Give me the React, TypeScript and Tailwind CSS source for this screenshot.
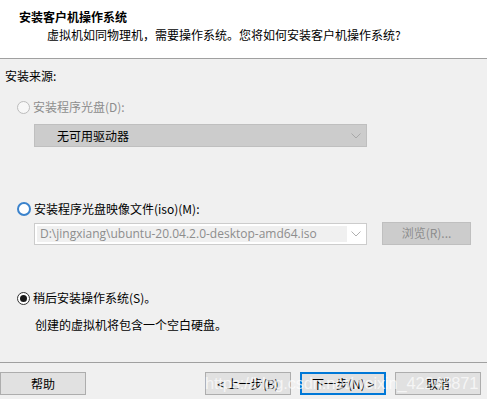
import React from 'react';

const font = { fontFamily: '"Noto Sans CJK SC", "Microsoft YaHei", sans-serif' };

type RadioState = 'disabled' | 'focus' | 'checked';

const Radio: React.FC<{ state: RadioState }> = ({ state }) => {
  if (state === 'disabled') {
    return <span className="block w-[13px] h-[13px] rounded-full border border-[#bcbcbc] bg-[#f7f7f7]" />;
  }
  if (state === 'focus') {
    return <span className="block w-[14px] h-[14px] rounded-full border-2 border-[#3b83cc] bg-white" />;
  }
  return (
    <span className="flex items-center justify-center w-[13px] h-[13px] rounded-full border border-[#333333] bg-white">
      <span className="block w-[7px] h-[7px] rounded-full bg-[#1a1a1a]" />
    </span>
  );
};

const Chevron: React.FC<{ color?: string }> = ({ color = '#a8a8a8' }) => (
  <svg width="10" height="6" viewBox="0 0 10 6" className="shrink-0">
    <polyline points="0.5,0.5 5,5 9.5,0.5" fill="none" stroke={color} strokeWidth="1" />
  </svg>
);

const Button: React.FC<{ label: string; primary?: boolean; className?: string }> = ({ label, primary, className = '' }) => (
  <div
    className={`h-[23px] w-[86px] flex items-center justify-center bg-[#e1e1e1] text-[12px] text-black ${
      primary ? 'border-2 border-[#0078d7]' : 'border border-[#adadad]'
    } ${className}`}
  >
    {label}
  </div>
);

export default function App() {
  return (
    <div className="relative w-[487px] h-[399px] bg-[#f0f0f0] overflow-hidden text-[12px] leading-[16px] text-black" style={font}>
      <div className="h-[59px] bg-white border-b border-[#a0a0a0]">
        <div className="pl-[19px] pt-[9px] font-bold">安装客户机操作系统</div>
        <div className="pl-[47px] pt-[2px]">虚拟机如同物理机，需要操作系统。您将如何安装客户机操作系统?</div>
      </div>

      <div className="pl-[5px] mt-[9px]">安装来源:</div>

      <div className="flex items-center gap-[3px] pl-[17px] mt-[15px] text-[#8d8d8d]">
        <Radio state="disabled" />
        <span>安装程序光盘(D):</span>
      </div>
      <div className="ml-[34px] mt-[9px] w-[333px] h-[23px] bg-[#cccccc] border border-[#bfbfbf] flex items-center pl-[22px] pr-[5px]">
        <span className="flex-1">无可用驱动器</span>
        <Chevron />
      </div>

      <div className="flex items-center gap-[3px] pl-[17px] mt-[54px]">
        <Radio state="focus" />
        <span>安装程序光盘映像文件(iso)(M):</span>
      </div>
      <div className="flex items-center mt-[6px] pl-[34px]">
        <div className="w-[333px] h-[22px] bg-white border border-[#cccccc] flex items-center p-[2px] pr-[5px]">
          <div className="w-[310px] h-full bg-[#f0f0f0] text-[#8d8d8d] flex items-center pl-[3px]" style={{ fontFamily: '"Open Sans", "Noto Sans", sans-serif', fontSize: '12px' }}>
            D:\jingxiang\ubuntu-20.04.2.0-desktop-amd64.iso
          </div>
          <div className="flex-1" />
          <Chevron color="#b0b0b0" />
        </div>
        <div className="ml-[15px] w-[89px] h-[23px] -mt-[2px] bg-[#cccccc] border border-[#bfbfbf] flex items-center justify-center text-[#8d8d8d]">
          浏览(R)...
        </div>
      </div>

      <div className="flex items-center gap-[3px] pl-[17px] mt-[45px]">
        <Radio state="checked" />
        <span>稍后安装操作系统(S)。</span>
      </div>
      <div className="pl-[35px] mt-[11px]">创建的虚拟机将包含一个空白硬盘。</div>

      <div className="mt-[29px] border-t border-[#a0a0a0]" />

      <div className="flex items-center mt-[9px]">
        <Button label="帮助" />
        <div className="flex-1" />
        <Button label="< 上一步(B)" />
        <Button label="下一步(N) >" primary className="ml-[9px]" />
        <Button label="取消" className="ml-[9px] mr-[6px]" />
      </div>

      <div
        className="absolute left-[205px] top-[372px] text-[16.5px] leading-[22px] tracking-[-0.2px] text-white/70 whitespace-nowrap pointer-events-none"
        style={{ fontFamily: '"Liberation Sans", sans-serif' }}
      >
        https://blog.csdn.net/weixin_42248871
      </div>
    </div>
  );
}
